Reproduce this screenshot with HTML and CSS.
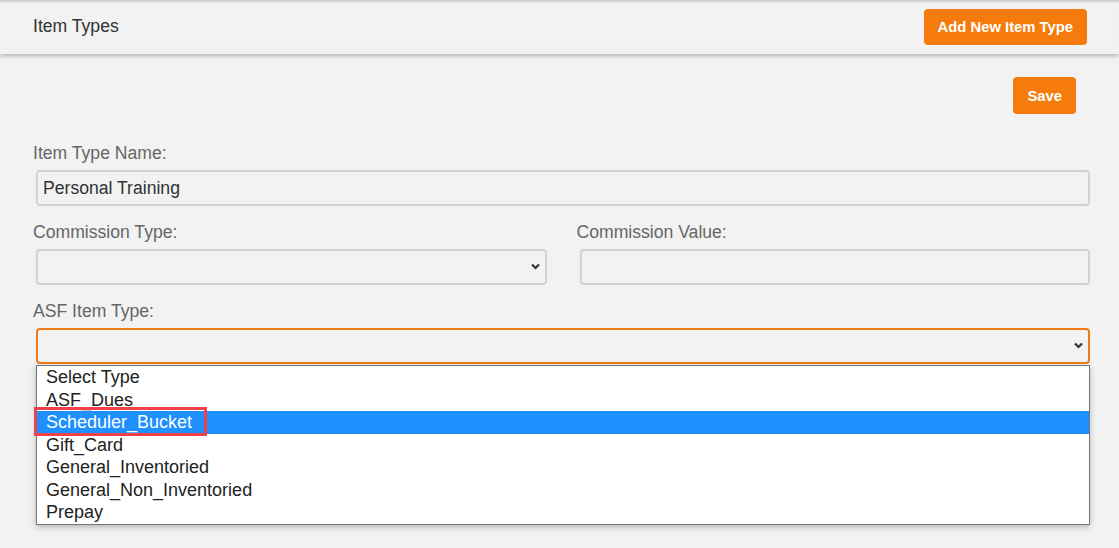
FILE: index.html
```html
<!DOCTYPE html>
<html lang="en">
<head>
    <meta charset="UTF-8">
    <meta name="viewport" content="width=device-width, initial-scale=1.0">
    <title>Item Types</title>
    <link rel="stylesheet" href="styles.css">
</head>

<body>
    <header class="page-header">
        <h1 class="page-title">Item Types</h1>
        <button class="btn btn-orange">Add New Item Type</button>
    </header>

    <main class="content">
        <div class="actions">
            <button class="btn btn-orange btn-save">Save</button>
        </div>

        <div class="field">
            <label>Item Type Name:</label>
            <input class="form-control" type="text" value="Personal Training">
        </div>

        <div class="field-row">
            <div class="field">
                <label>Commission Type:</label>
                <div class="select-wrap">
                    <select class="form-control"><option></option></select>
                    <svg class="chevron" width="9" height="7" viewBox="0 0 9 7"><path d="M1 1.5l3.5 3.5 3.5-3.5" fill="none" stroke="#333" stroke-width="2.2"/></svg>
                </div>
            </div>
            <div class="field">
                <label>Commission Value:</label>
                <input class="form-control" type="text">
            </div>
        </div>

        <div class="field">
            <label>ASF Item Type:</label>
            <div class="select-wrap">
                <select class="form-control focused"><option></option></select>
                <svg class="chevron" width="9" height="7" viewBox="0 0 9 7"><path d="M1 1.5l3.5 3.5 3.5-3.5" fill="none" stroke="#333" stroke-width="2.2"/></svg>

                <!-- open list of the select -->
                <ul class="dropdown">
                    <li>Select Type</li>
                    <li>ASF_Dues</li>
                    <li class="selected marked">Scheduler_Bucket</li>
                    <li>Gift_Card</li>
                    <li>General_Inventoried</li>
                    <li>General_Non_Inventoried</li>
                    <li>Prepay</li>
                </ul>
            </div>
        </div>
    </main>
</body>
</html>
```

FILE: styles.css
```css
body {
    margin: 0;
    background-color: #f1f2f1;
    font-family: "Liberation Sans", Arial, sans-serif;
    color: #333;
    height: 548px;
    overflow: hidden;
}
.page-header {
    display: flex;
    align-items: center;
    justify-content: space-between;
    height: 54px;
    padding: 0 32px 0 33px;
    box-shadow: inset 0 3px 3px -2px rgba(0, 0, 0, 0.25), 0 2px 4px rgba(0, 0, 0, 0.25);
}
.page-title {
    margin: 0 0 2px 0;
    font-size: 17.6px;
    font-weight: normal;
    line-height: 20px;
    color: #333;
}
.btn {
    border: none;
    border-radius: 4px;
    font-family: inherit;
    font-size: 14.8px;
    font-weight: bold;
    cursor: pointer;
}
.btn-orange {
    background: #f57c0c;
    color: white;
    height: 36px;
    padding: 0 14px;
}
.btn-save {
    height: 37px;
    padding: 0 14px;
}
.content {
    padding: 0 26px 0 33px;
}
.actions {
    display: flex;
    justify-content: flex-end;
    margin-top: 23px;
    padding-right: 17px;
    margin-bottom: 29px;
}
.field {
    margin-bottom: 16px;
}
.field label {
    display: block;
    font-size: 17.6px;
    line-height: 20px;
    color: #666;
    margin-bottom: 7px;
}
.field-row {
    display: grid;
    grid-template-columns: 1fr 1fr;
    column-gap: 27px;
}
.field-row .field {
    margin-bottom: 16px;
}
.form-control {
    display: block;
    box-sizing: border-box;
    width: calc(100% - 6px);
    height: 36px;
    margin: 0 3px;
    padding: 0 5px;
    border: 2px solid #d2d2d2;
    border-radius: 4px;
    background: transparent;
    font-family: inherit;
    font-size: 17.6px;
    color: #333;
    outline: none;
}
select.form-control {
    appearance: none;
    -webkit-appearance: none;
}
.form-control.focused {
    border-color: #f07b12;
}
.select-wrap {
    position: relative;
}
.chevron {
    position: absolute;
    right: 10px;
    top: 14px;
}
.dropdown {
    position: absolute;
    top: 37px;
    left: 3px;
    right: 3px;
    margin: 0;
    padding: 0;
    list-style: none;
    background: white;
    border: 1px solid #767676;
    box-shadow: 0 2px 6px rgba(0, 0, 0, 0.25);
}
.dropdown li {
    position: relative;
    padding: 1px 9px;
    line-height: 20.5px;
    font-size: 18px;
    color: #222;
}
.dropdown li.selected {
    background: #1e90ff;
    color: white;
}
.dropdown li.marked::after {
    content: "";
    position: absolute;
    left: -3px;
    top: -4px;
    width: 173px;
    height: 29px;
    box-sizing: border-box;
    border: 3px solid #ef4149;
}
```
